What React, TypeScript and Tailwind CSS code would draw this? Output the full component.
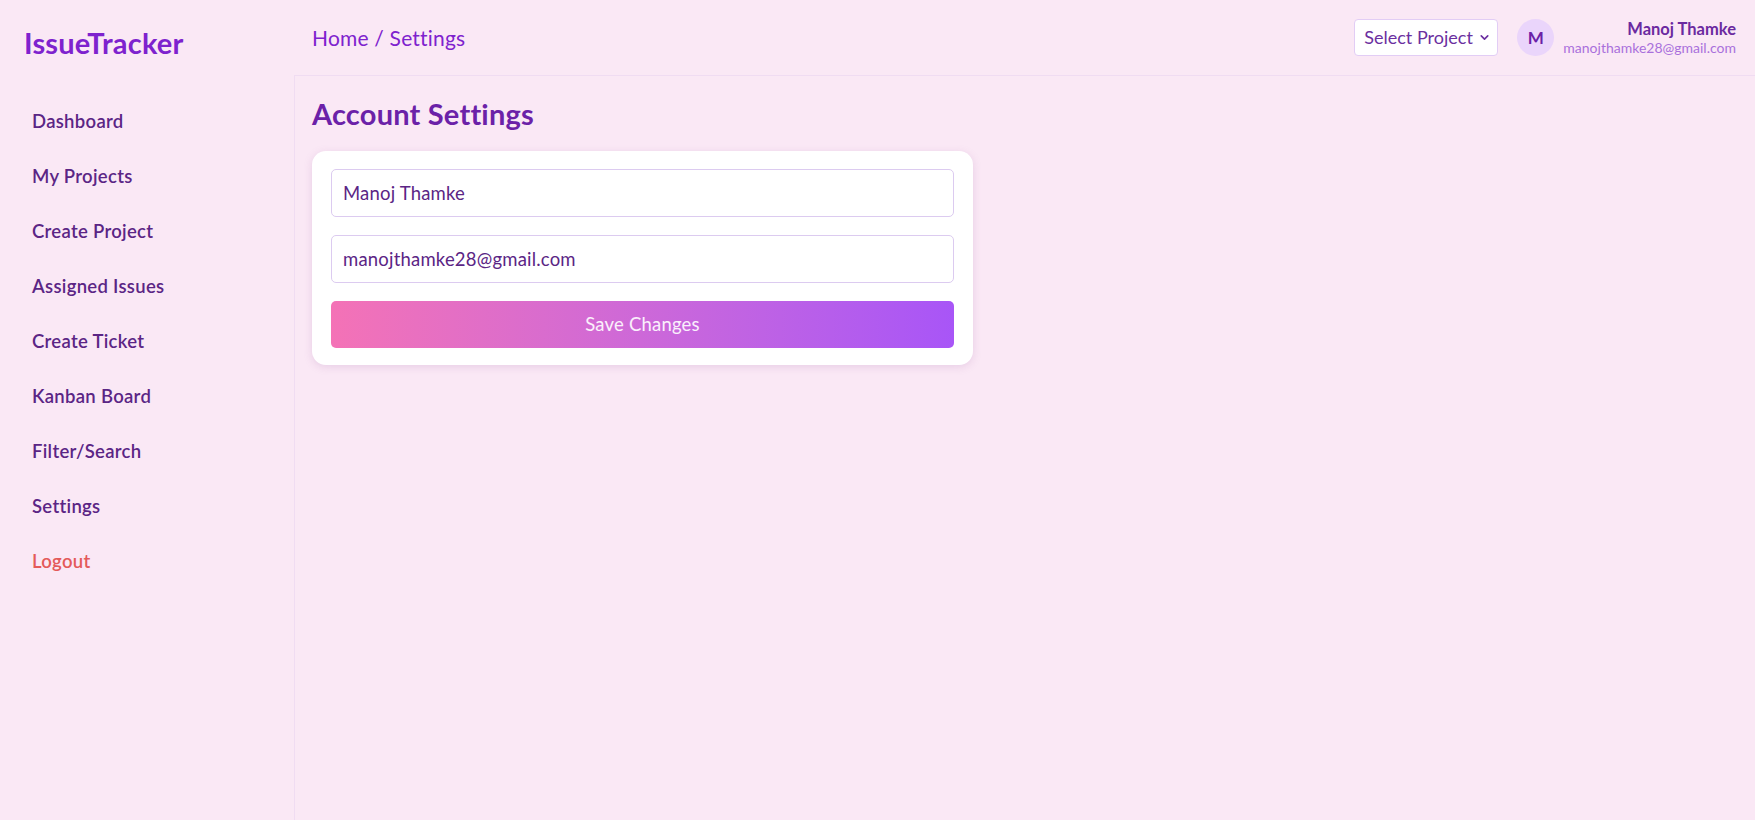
import { ChevronDown } from "lucide-react"

const navItems = [
    "Dashboard",
    "My Projects",
    "Create Project",
    "Assigned Issues",
    "Create Ticket",
    "Kanban Board",
    "Filter/Search",
    "Settings",
]

const Sidebar = () => (
    <aside className="w-[294px] shrink-0 flex flex-col">
        <div className="pl-[24px] pt-[26px] h-[94px]">
            <h1 className="text-[29px] leading-[34px] font-bold tracking-[0.2px] text-[#7e22ce]">IssueTracker</h1>
        </div>
        <nav className="flex flex-col px-[16px]">
            {navItems.map((item) => (
                <a
                    key={item}
                    href="#"
                    className="h-[55px] flex items-center px-[16px] text-[18.5px] font-semibold tracking-[0.3px] text-[#5b2585]"
                >
                    {item}
                </a>
            ))}
            <button className="h-[55px] flex items-center px-[16px] text-[18.5px] font-semibold tracking-[0.3px] text-[#e45a5a] text-left">
                Logout
            </button>
        </nav>
    </aside>
)

const Header = () => (
    <header className="h-[76px] shrink-0 flex items-center justify-between pl-[18px] pr-[19px] border-b border-[#f0dcf2]">
        <p className="text-[21px] tracking-[0.2px] text-[#7e22ce]">Home / Settings</p>
        <div className="flex items-center">
            <div className="w-[144px] h-[37px] flex items-center justify-between pl-[9px] pr-[6px] bg-white border border-[#e2cdf5] rounded-[4px] text-[18px] text-[#6b2fa0]">
                <span>Select Project</span>
                <ChevronDown size={13} strokeWidth={3} />
            </div>
            <div className="ml-[19px] w-[37px] h-[37px] rounded-full bg-[#ead5fb] flex items-center justify-center text-[17px] font-bold text-[#6b21a8]">
                M
            </div>
            <div className="ml-[9px] flex flex-col items-end">
                <span className="text-[16.5px] leading-[20px] font-bold text-[#6b2aa0]">Manoj Thamke</span>
                <span className="text-[14px] leading-[18px] text-[#a970dc]">manojthamke28@gmail.com</span>
            </div>
        </div>
    </header>
)

export default function App() {
    return (
        <div
            className="flex h-[820px] bg-[#fae8f5] overflow-hidden"
            style={{ fontFamily: "Lato, 'Open Sans', sans-serif" }}
        >
            <Sidebar />
            <div className="flex-1 flex flex-col">
                <Header />
                <main className="flex-1 border-l border-[#f0dcf2] pl-[17px] pt-[19px]">
                    <h2 className="text-[29px] leading-[38px] font-bold tracking-[0.2px] text-[#6b21a8] mb-[18px]">Account Settings</h2>
                    <form className="w-[661px] bg-white rounded-[14px] shadow-[0_2px_8px_rgba(150,90,160,0.18)] px-[19px] pt-[18px] pb-[17px] flex flex-col gap-[18px]">
                        <input
                            defaultValue="Manoj Thamke"
                            className="h-[48px] px-[11px] border border-[#dccbf0] rounded-[5px] text-[18.5px] tracking-[0.2px] text-[#5b2585] outline-none"
                        />
                        <input
                            defaultValue="manojthamke28@gmail.com"
                            className="h-[48px] px-[11px] border border-[#dccbf0] rounded-[5px] text-[18.5px] tracking-[0.2px] text-[#5b2585] outline-none"
                        />
                        <button
                            type="button"
                            className="h-[47px] rounded-[5px] bg-gradient-to-r from-[#f472b6] to-[#a855f7] text-white/90 text-[18.5px] tracking-[0.2px]"
                        >
                            Save Changes
                        </button>
                    </form>
                </main>
            </div>
        </div>
    )
}
